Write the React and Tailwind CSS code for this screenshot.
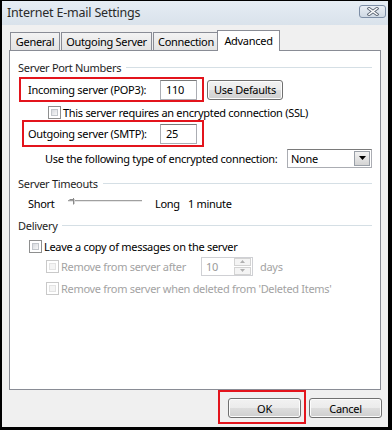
import React from "react";

const BTN =
  "flex items-center justify-center rounded-[3px] border border-[#707070] bg-[linear-gradient(to_bottom,#f2f2f2_0%,#ebebeb_50%,#dddddd_50%,#cfcfcf_100%)] shadow-[inset_0_0_0_1px_#fcfcfc] text-black";

function Checkbox({ disabled }) {
  return (
    <div
      className={
        "w-[13px] h-[13px] shrink-0 border p-[2px] bg-white " +
        (disabled ? "border-[#c9c9c9]" : "border-[#8e8f8f]")
      }
    >
      <div
        className={
          "w-full h-full " +
          (disabled
            ? "bg-[#f4f4f4] border border-[#e3e3e3]"
            : "bg-[linear-gradient(135deg,#d6d9de,#f8f8f8)] border border-[#c2c6cb]")
        }
      />
    </div>
  );
}

function GroupLabel({ children, className }) {
  return (
    <div className={"flex items-center h-[16px] " + className}>
      <span className="text-[#1e1e1e] whitespace-nowrap">{children}</span>
      <div className="flex-1 h-px bg-[#d5dfe5] ml-[5px]" />
    </div>
  );
}

export default function App() {
  return (
    <div className="w-[392px] h-[430px] bg-black pt-px pl-[2px] pr-[4px] pb-[3px] font-['Noto_Sans',sans-serif] text-[11px] tracking-[-0.3px] text-black leading-none">
      <div className="h-full flex flex-col bg-[#f0f0f0]">
        {/* title bar */}
        <div className="h-[24px] shrink-0 flex items-center pl-[5px] pr-[2px] bg-[linear-gradient(to_bottom,#e6edf4,#d9e2eb)]">
          <span className="text-[12.5px] text-[#2a2a2a] tracking-[-0.2px]">Internet E-mail Settings</span>
          <div className="ml-auto self-start mt-[4px] w-[27px] h-[13px] rounded-[3px] border border-[#7d8ea6] bg-[linear-gradient(to_bottom,#e9eef4,#cfd9e4)] flex items-center justify-center">
            <svg width="12" height="9" viewBox="0 0 12 9">
              <path d="M2 1.5 L10 7.5 M10 1.5 L2 7.5" stroke="#5c6675" strokeWidth="3.2" strokeLinecap="square" />
              <path d="M2 1.5 L10 7.5 M10 1.5 L2 7.5" stroke="#ffffff" strokeWidth="1.4" strokeLinecap="square" />
            </svg>
          </div>
        </div>

        {/* body */}
        <div className="flex-1 flex flex-col pl-[7px] pr-[7px] pt-[5px]">
          {/* tabs */}
          <div className="h-[20px] flex items-end pl-px relative z-10">
            <div className="w-[50px] h-[18px] border border-b-0 border-[#898c95] bg-[linear-gradient(to_bottom,#f3f3f3,#e3e3e3)] flex items-center justify-center">
              General
            </div>
            <div className="ml-px w-[91px] h-[18px] border border-b-0 border-[#898c95] bg-[linear-gradient(to_bottom,#f3f3f3,#e3e3e3)] flex items-center justify-center">
              Outgoing Server
            </div>
            <div className="ml-px w-[66px] h-[18px] border border-b-0 border-[#898c95] bg-[linear-gradient(to_bottom,#f3f3f3,#e3e3e3)] flex items-center justify-center">
              Connection
            </div>
            <div className="ml-[-2px] w-[63px] h-[21px] -mb-px border border-b-0 border-[#898c95] bg-white flex items-start justify-center pt-[4px]">
              Advanced
            </div>
          </div>

          {/* panel */}
          <div className="h-[340px] shrink-0 border border-[#898c95] bg-white px-[8px] pt-[8px]">
            <GroupLabel>Server Port Numbers</GroupLabel>

            <div className="mt-[2px] flex items-center">
              <div className="ml-px w-[185px] h-[25px] border-2 border-[#e3141c] flex items-center pl-[7px]">
                <span className="whitespace-nowrap">Incoming server (POP3):</span>
                <div className="ml-auto mr-[5px] w-[37px] h-[20px] border border-[#abadb3] border-t-[#7a7a7a] bg-white flex items-center pl-[5px]">
                  110
                </div>
              </div>
              <div className={"ml-[3px] w-[76px] h-[20px] " + BTN}>Use Defaults</div>
            </div>

            <div className="mt-[2px] h-[16px] flex items-center ml-[30px]">
              <Checkbox />
              <span className="ml-[2px] whitespace-nowrap">This server requires an encrypted connection (SSL)</span>
            </div>

            <div className="ml-[4px] w-[182px] h-[27px] border-2 border-[#e3141c] flex items-center pl-[4px]">
              <span className="whitespace-nowrap">Outgoing server (SMTP):</span>
              <div className="ml-auto mr-[5px] w-[37px] h-[20px] border border-[#abadb3] border-t-[#7a7a7a] bg-white flex items-center pl-[5px]">
                25
              </div>
            </div>

            <div className="mt-px h-[20px] flex items-center">
              <span className="ml-[27px] whitespace-nowrap">Use the following type of encrypted connection:</span>
              <div className="ml-auto w-[85px] h-[19px] border border-[#abadb3] border-t-[#7a7a7a] bg-white flex items-center pl-[3px] pr-px">
                <span>None</span>
                <div className="ml-auto w-[16px] h-[15px] border border-[#9aa0a8] bg-[linear-gradient(to_bottom,#f2f2f2,#d4d4d4)] flex items-center justify-center">
                  <svg width="7" height="4" viewBox="0 0 7 4">
                    <path d="M0 0 H7 L3.5 4 Z" fill="#000" />
                  </svg>
                </div>
              </div>
            </div>

            <GroupLabel className="mt-[7px]">Server Timeouts</GroupLabel>

            <div className="mt-[4px] h-[16px] flex items-center ml-[10px]">
              <span className="w-[40px]">Short</span>
              <div className="relative w-[74px] h-[16px]">
                <div className="absolute left-0 right-0 top-[5px] h-[3px] border-t border-[#a0a0a0] border-b border-b-[#ffffff] bg-[#e7e7e7]" />
                <svg className="absolute left-[1px] top-[2px]" width="10" height="9" viewBox="0 0 10 9">
                  <path d="M0.5 2.5 H5.5 M4.5 1 V7.5" stroke="#8a8a8a" strokeWidth="1" fill="none" />
                  <path d="M5.5 2 V7" stroke="#cfcfcf" strokeWidth="1" />
                </svg>
              </div>
              <span className="ml-[13px] w-[33px]">Long</span>
              <span className="whitespace-nowrap">1 minute</span>
            </div>

            <GroupLabel className="mt-[6px]">Delivery</GroupLabel>

            <div className="mt-[5px] h-[16px] flex items-center ml-[11px]">
              <Checkbox />
              <span className="ml-[2px] whitespace-nowrap">Leave a copy of messages on the server</span>
            </div>

            <div className="mt-[2px] h-[20px] flex items-center ml-[28px] text-[#a3a3a3]">
              <Checkbox disabled />
              <span className="ml-[2px] w-[140px] whitespace-nowrap">Remove from server after</span>
              <div className="w-[52px] h-[19px] border border-[#cfd0d4] bg-white flex items-center pl-[4px] pr-px">
                <span className="text-[#9a9a9a]">10</span>
                <div className="ml-auto w-[17px] h-[17px] flex flex-col gap-px">
                  <div className="flex-1 border border-[#d3d3d3] bg-[#f4f4f4] flex items-center justify-center">
                    <svg width="5" height="3" viewBox="0 0 5 3"><path d="M0 3 H5 L2.5 0 Z" fill="#b0b0b0" /></svg>
                  </div>
                  <div className="flex-1 border border-[#d3d3d3] bg-[#f4f4f4] flex items-center justify-center">
                    <svg width="5" height="3" viewBox="0 0 5 3"><path d="M0 0 H5 L2.5 3 Z" fill="#b0b0b0" /></svg>
                  </div>
                </div>
              </div>
              <span className="ml-[7px]">days</span>
            </div>

            <div className="mt-[4px] h-[16px] flex items-center ml-[28px] text-[#a3a3a3]">
              <Checkbox disabled />
              <span className="ml-[2px] whitespace-nowrap">Remove from server when deleted from 'Deleted Items'</span>
            </div>
          </div>

          {/* buttons */}
          <div className="h-[34px] shrink-0 flex justify-end mr-[-1px]">
            <div className="w-[88px] h-[34px] border-2 border-[#e3141c] pl-[8px] pt-[6px]">
              <div className={"w-[73px] h-[20px] " + BTN}>OK</div>
            </div>
            <div className={"ml-[3px] mt-[8px] w-[73px] h-[20px] " + BTN}>Cancel</div>
          </div>
        </div>
      </div>
    </div>
  );
}
